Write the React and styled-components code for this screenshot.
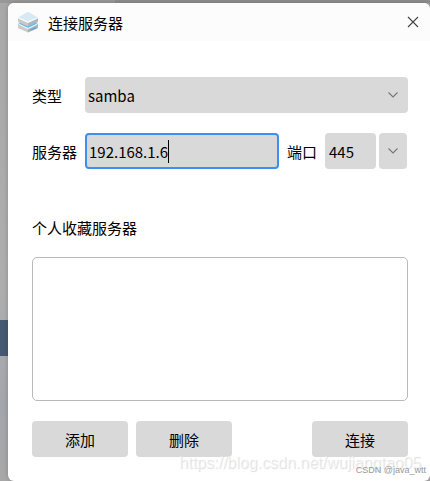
import React, { useState } from 'react'
import styled, { createGlobalStyle } from 'styled-components'

const GlobalStyle = createGlobalStyle`
  * {
    box-sizing: border-box;
  }
  body {
    margin: 0;
    font-family: "Noto Sans CJK SC", sans-serif;
    font-size: 15px;
    line-height: 24px;
    color: #000;
  }
  button, input, select {
    font: inherit;
    color: inherit;
  }
`

const Desktop = styled.div`
  min-height: 100vh;
  padding: 3px 0 0 8px;
  overflow: hidden;
  background:
    linear-gradient(#465974, #465974) 0 320px / 8px 36px no-repeat,
    linear-gradient(90deg, #989898 115px, #8d8d8d 115px) 0 0 / 100% 3px no-repeat,
    linear-gradient(#a8a8a8, #aeaeae 60%, #a3a6ac 85%, #a8a8a8);
`

const Dialog = styled.main`
  position: relative;
  background: #fff;
  border-radius: 6px;
  overflow: hidden;
  box-shadow: 0 0 5px rgba(0, 0, 0, 0.2);
`

const TitleBar = styled.header`
  display: flex;
  align-items: center;
  height: 38px;
  padding: 0 9px 0 8px;
  background: #fcfcfc;
`

const Title = styled.h1`
  flex: 1;
  margin: 0 0 0 8px;
  padding-top: 2px;
  font-size: 15px;
  font-weight: 400;
`

const CloseButton = styled.button`
  display: flex;
  padding: 2px;
  border: 0;
  background: none;
`

const Form = styled.form`
  display: flex;
  flex-direction: column;
  gap: 20px;
  padding: 36px 22px 24px 24px;
`

const Row = styled.div`
  display: flex;
  align-items: center;
`

const Label = styled.label`
  flex: none;
  width: ${ props => props.$width }px;
  padding-top: 2px;
`

const Field = styled.div`
  position: relative;
  flex: 1;
  min-width: 0;
`

const Select = styled.select`
  display: block;
  appearance: none;
  width: 100%;
  height: 36px;
  padding: 2px 28px 0 3px;
  border: 0;
  border-radius: 4px;
  background: #d9d9d9;
`

const SelectArrow = styled.span`
  position: absolute;
  top: 0;
  right: 10px;
  height: 100%;
  display: flex;
  align-items: center;
  pointer-events: none;
`

const TextInput = styled.input`
  display: block;
  width: 100%;
  height: 36px;
  padding: 0 2px;
  border: 2px solid ${ props => props.$active ? '#3b8ff5' : '#d9d9d9' };
  border-radius: 4px;
  background: #d9d9d9;
  caret-color: transparent;
  outline: none;
`

const Caret = styled.span`
  position: absolute;
  top: 7px;
  left: 83px;
  width: 1px;
  height: 23px;
  background: #000;
`

const Port = styled.div`
  display: flex;
  gap: 3px;
  width: 83px;
  margin-left: 8px;
  padding-right: 1px;
`

const PortButton = styled.button`
  flex: none;
  display: flex;
  align-items: center;
  justify-content: center;
  width: 28px;
  height: 36px;
  padding: 0;
  border: 0;
  border-radius: 4px;
  background: #d9d9d9;
`

const PortGroup = styled.div`
  display: flex;
  align-items: center;
  margin-left: 8px;
`

const Favorites = styled.section`
  display: flex;
  flex-direction: column;
  gap: 17px;
  margin-top: 27px;
`

const Heading = styled.h2`
  margin: 0;
  font-size: 15px;
  font-weight: 400;
`

const ServerList = styled.ul`
  height: 144px;
  margin: 0;
  padding: 4px;
  border: 1px solid #b9b9b9;
  border-radius: 5px;
  list-style: none;
`

const Actions = styled.div`
  display: flex;
  gap: 8px;
`

const Button = styled.button`
  width: 96px;
  height: 36px;
  padding: 2px 0 0;
  border: 0;
  border-radius: 4px;
  background: #d9d9d9;
  ${ props => props.$end && 'margin-left: auto;' }
`

const Watermark = styled.span`
  position: absolute;
  right: 9px;
  bottom: 6px;
  font-family: "Liberation Sans", sans-serif;
  font-size: 16px;
  color: rgba(255, 255, 255, 0.5);
  text-shadow: 1px 1px 1px rgba(0, 0, 0, 0.14);
  pointer-events: none;
`

const Credit = styled.span`
  position: absolute;
  right: 4px;
  bottom: 3px;
  font-family: "Liberation Sans", sans-serif;
  font-size: 9px;
  line-height: 16px;
  color: #999;
  pointer-events: none;
`

const Chevron = () => (
  <svg width="10" height="6" viewBox="0 0 10 6" fill="none" stroke="#777" strokeWidth="1.1" aria-hidden="true">
    <path d="M0.5 0.5L5 5L9.5 0.5" />
  </svg>
)

const ServerIcon = () => (
  <svg width="24" height="24" viewBox="0 0 24 24" aria-hidden="true">
    <path d="M2 14L12 18V22.5L3 18.5Q2 18 2 17Z" fill="#cccbc8" />
    <path d="M22 14L12 18V22.5L21 18.5Q22 18 22 17Z" fill="#a9aeb2" />
    <path d="M2 14L12 9L22 14L12 18.5Z" fill="#58bdf0" />
    <path d="M3 14.2L12 18.5L21 14.2" fill="none" stroke="#e4f5fd" strokeWidth="1.2" />
    <path d="M15 20L20 17.8" stroke="#48aade" strokeWidth="1.2" />
    <path d="M2 7.5L12 12V16.5L3 12.5Q2 12 2 11Z" fill="#c9c8c5" />
    <path d="M22 7.5L12 12V16.5L21 12.5Q22 12 22 11Z" fill="#b3b6b9" />
    <path d="M2 7.5L10.5 2.4Q12 1.6 13.5 2.4L22 7.5L12 12Z" fill="#d6eaf5" />
    <path d="M2.5 7.8L12 12.2L21.5 7.8" fill="none" stroke="#f6fafc" strokeWidth="1.4" />
    <path d="M15 14L20 11.6" stroke="#8fc0d8" strokeWidth="1" />
  </svg>
)

const App = () => {
  const [type, setType] = useState('samba')
  const [server, setServer] = useState('192.168.1.6')
  const [port, setPort] = useState('445')

  return (
    <Desktop>
      <GlobalStyle />
      <Dialog>
        <TitleBar>
          <ServerIcon />
          <Title>连接服务器</Title>
          <CloseButton type="button" aria-label="关闭">
            <svg width="12" height="12" viewBox="0 0 12 12" stroke="#444" strokeWidth="1.1">
              <path d="M1 1L11 11M11 1L1 11" />
            </svg>
          </CloseButton>
        </TitleBar>
        <Form onSubmit={ e => e.preventDefault() }>
          <Row>
            <Label htmlFor="type" $width={ 53 }>类型</Label>
            <Field>
              <Select id="type" value={ type } onChange={ e => setType(e.target.value) }>
                <option value="samba">samba</option>
                <option value="ftp">ftp</option>
              </Select>
              <SelectArrow><Chevron /></SelectArrow>
            </Field>
          </Row>
          <Row>
            <Label htmlFor="server" $width={ 53 }>服务器</Label>
            <Field>
              <TextInput id="server" $active value={ server } onChange={ e => setServer(e.target.value) } />
              <Caret />
            </Field>
            <PortGroup>
              <Label htmlFor="port" $width={ 30 }>端口</Label>
              <Port>
                <TextInput id="port" value={ port } onChange={ e => setPort(e.target.value) } />
                <PortButton type="button" aria-label="选择端口"><Chevron /></PortButton>
              </Port>
            </PortGroup>
          </Row>
          <Favorites>
            <Heading id="favorites">个人收藏服务器</Heading>
            <ServerList aria-labelledby="favorites" />
          </Favorites>
          <Actions>
            <Button type="button">添加</Button>
            <Button type="button">删除</Button>
            <Button type="submit" $end>连接</Button>
          </Actions>
        </Form>
        <Watermark>https://blog.csdn.net/wujiangtao05</Watermark>
        <Credit>CSDN @java_wtt</Credit>
      </Dialog>
    </Desktop>
  )
}

export default App
